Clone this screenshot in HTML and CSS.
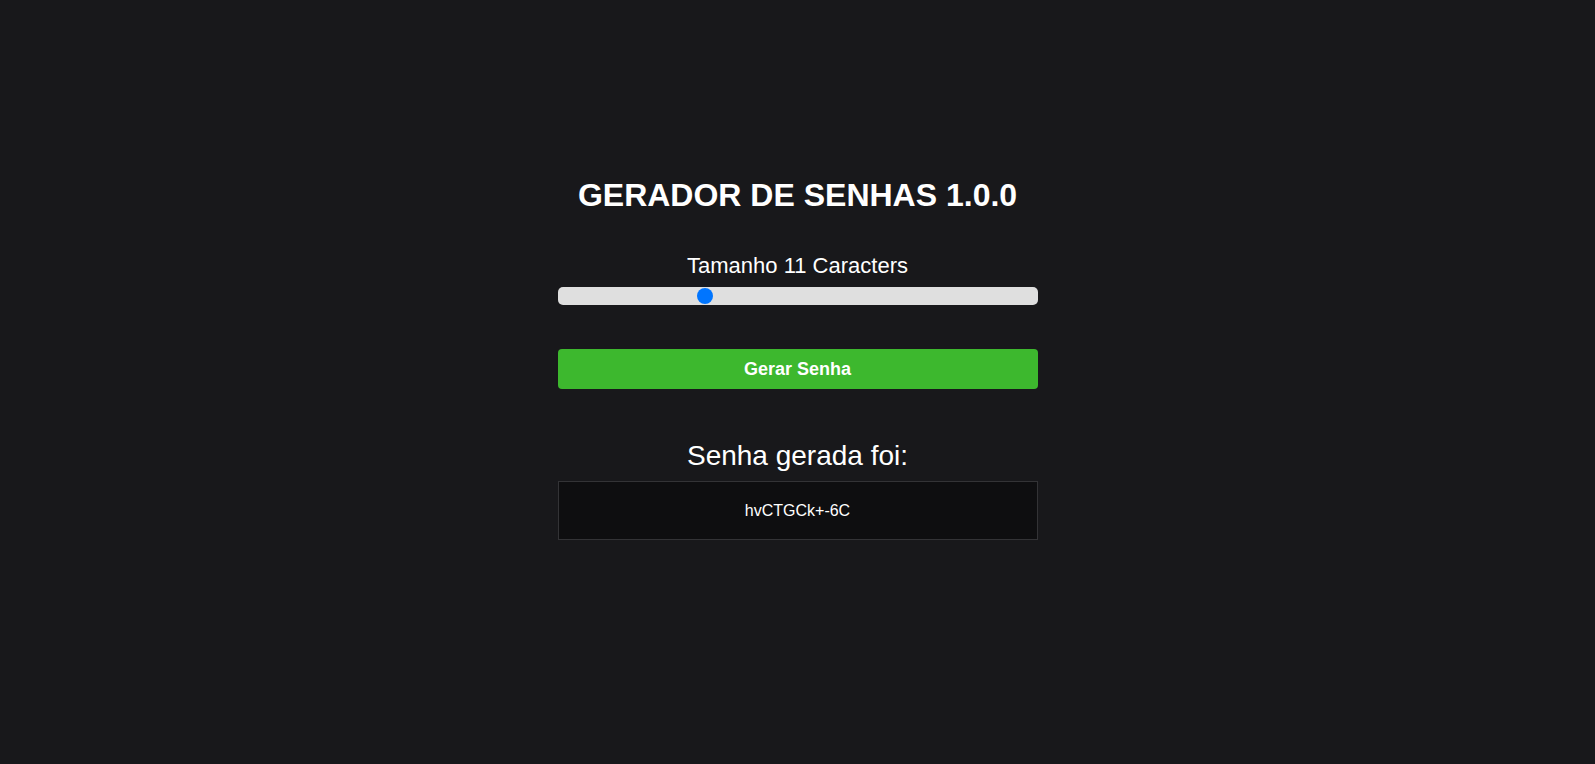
FILE: index.html
```html
<!DOCTYPE html>
<html lang="pt-BR">
<head>
<meta charset="utf-8">
<title>Gerador de Senhas</title>
<link rel="stylesheet" href="styles.css">
</head>
<body>
<main class="app">
  <h1 class="title">GERADOR DE SENHAS 1.0.0</h1>
  <p class="size-label">Tamanho 11 Caracters</p>
  <input class="slider" type="range" min="5" max="25" value="11">
  <button class="generate">Gerar Senha</button>
  <h2 class="result-title">Senha gerada foi:</h2>
  <div class="result-box">hvCTGCk+-6C</div>
</main>
</body>
</html>
```
FILE: styles.css
```css
html, body {
  margin: 0;
  padding: 0;
  background: #18181b;
  height: 100%;
}
body {
  font-family: "Liberation Sans", Arial, sans-serif;
  color: #ffffff;
}
.app {
  width: 480px;
  margin: 0 auto;
  padding-top: 177px;
  display: flex;
  flex-direction: column;
  align-items: stretch;
  text-align: center;
}
.title {
  margin: 0;
  font-size: 32px;
  line-height: 36px;
  font-weight: 700;
}
.size-label {
  margin: 40px 0 0;
  font-size: 22px;
  line-height: 25px;
}
.slider {
  -webkit-appearance: none;
  appearance: none;
  margin: 9px 0 0;
  width: 100%;
  height: 18px;
  background: #dfdfdf;
  border-radius: 5px;
  outline: none;
  padding: 0;
}
.slider::-webkit-slider-thumb {
  -webkit-appearance: none;
  appearance: none;
  width: 16px;
  height: 16px;
  border-radius: 50%;
  background: #0075ff;
  border: none;
  cursor: pointer;
}
.generate {
  margin: 44px 0 0;
  height: 40px;
  border: none;
  border-radius: 4px;
  background: #3db82e;
  color: #ffffff;
  font-family: "Liberation Sans", Arial, sans-serif;
  font-size: 18px;
  font-weight: 700;
  cursor: pointer;
}
.result-title {
  margin: 50px 0 0;
  font-size: 28px;
  line-height: 34px;
  font-weight: 400;
}
.result-box {
  margin-top: 8px;
  padding: 20px;
  line-height: 17px;
  font-size: 16px;
  background: #0e0e10;
  border: 1px solid #333336;
}
```
